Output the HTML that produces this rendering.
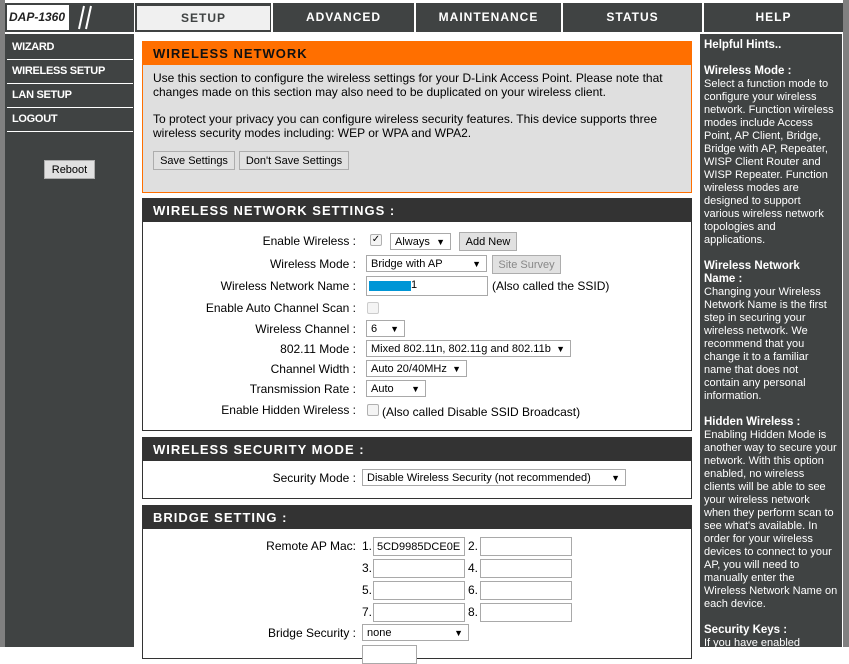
<!DOCTYPE html>
<html><head><meta charset="utf-8"><style>
*{margin:0;padding:0;box-sizing:border-box}
body{width:849px;height:647px;overflow:hidden;background:#fff;font-family:"Liberation Sans",sans-serif;position:relative}
.a{position:absolute}
.tab{position:absolute;top:3px;height:29px;background:#404343;color:#fff;font-weight:bold;font-size:12px;letter-spacing:1px;text-align:center;line-height:29px}
.nav{position:absolute;left:7px;width:126px;color:#fff;font-weight:bold;font-size:11px;letter-spacing:-0.3px;padding-left:5px;height:24px;line-height:22px;border-bottom:1px solid #fff}
.hdr{position:absolute;left:142px;width:550px;height:24px;background:#333;color:#fff;font-weight:bold;font-size:13px;letter-spacing:1px;padding-left:11px;line-height:26px}
.box{position:absolute;left:142px;width:550px;border:1px solid #333;border-top:none;background:#fff}
.lbl{position:absolute;right:493px;font-size:12px;color:#000;text-align:right;white-space:nowrap}
.sel{position:absolute;height:17px;border:1px solid #a9a9a9;background:#fff;font-size:11px;padding-left:4px;line-height:16px;white-space:nowrap}
.sel::after{content:"▼";position:absolute;right:5px;top:0;font-size:9px}
.btn{position:absolute;height:19px;border:1px solid #adadad;background:#e1e1e1;font-size:11px;text-align:center;line-height:18px;white-space:nowrap}
.inp{position:absolute;height:19px;border:1px solid #a9a9a9;background:#fff;font-size:11px;padding-left:3px;line-height:18px}
.cb{position:absolute;width:12px;height:12px;border:1px solid #b0b0b0;border-radius:2px;background:#f4f4f4}
.t{position:absolute;font-size:12px;white-space:nowrap}
.help{position:absolute;left:700px;top:34px;width:142px;height:613px;background:#404343;color:#fff;font-size:11px;line-height:13px;padding:5px 4px;white-space:nowrap}
.help b{font-size:11.5px}
</style></head><body>
<div class="a" style="left:0;top:0;width:5px;height:647px;background:#808080"></div>
<div class="a" style="left:843px;top:0;width:6px;height:647px;background:#808080"></div>
<div class="a" style="left:5px;top:3px;width:838px;height:29px;background:#fff"></div>
<div class="a" style="left:5px;top:3px;width:129px;height:29px;background:#404343"></div>
<div class="a" style="left:7px;top:5px;width:62px;height:25px;background:#fff;font-style:italic;font-weight:bold;font-size:12px;line-height:25px;padding-left:2px;color:#222;white-space:nowrap;overflow:hidden">DAP-1360</div>
<svg class="a" style="left:70px;top:5px" width="26" height="26"><line x1="9" y1="24" x2="14" y2="1" stroke="#fff" stroke-width="2"/><line x1="16" y1="24" x2="21" y2="1" stroke="#fff" stroke-width="2"/></svg>
<div class="tab" style="left:135px;width:136px;background:#404343"></div>
<div class="a" style="left:137px;top:6px;width:133px;height:24px;background:#f0f0f0;color:#404343;font-weight:bold;font-size:12px;letter-spacing:1px;text-align:center;line-height:24px">SETUP</div>
<div class="tab" style="left:273px;width:141px">ADVANCED</div>
<div class="tab" style="left:416px;width:145px">MAINTENANCE</div>
<div class="tab" style="left:563px;width:139px">STATUS</div>
<div class="tab" style="left:704px;width:139px">HELP</div>

<div class="a" style="left:5px;top:34px;width:129px;height:613px;background:#404343"></div>
<div class="nav" style="top:36px">WIZARD</div>
<div class="nav" style="top:60px">WIRELESS SETUP</div>
<div class="nav" style="top:84px">LAN SETUP</div>
<div class="nav" style="top:108px">LOGOUT</div>
<div class="btn" style="left:44px;top:160px;width:51px;height:19px;background:#e1e1e1">Reboot</div>

<div class="a" style="left:142px;top:41px;width:550px;height:152px;border:1px solid #ff6f00;background:#dfdfdf"></div>
<div class="a" style="left:142px;top:41px;width:550px;height:24px;background:#ff6f00;font-weight:bold;font-size:13px;letter-spacing:1px;padding-left:11px;line-height:26px;color:#111">WIRELESS NETWORK</div>
<div class="t" style="left:153px;top:71px;line-height:14px">Use this section to configure the wireless settings for your D-Link Access Point. Please note that<br>changes made on this section may also need to be duplicated on your wireless client.</div>
<div class="t" style="left:153px;top:112px;line-height:14px">To protect your privacy you can configure wireless security features. This device supports three<br>wireless security modes including: WEP or WPA and WPA2.</div>
<div class="btn" style="left:153px;top:151px;width:82px">Save Settings</div>
<div class="btn" style="left:239px;top:151px;width:110px">Don't Save Settings</div>

<div class="hdr" style="top:198px">WIRELESS NETWORK SETTINGS :</div>
<div class="box" style="top:222px;height:209px"></div>
<div class="lbl" style="top:234px">Enable Wireless :</div>
<div class="cb" style="left:370px;top:234px;font-size:10px;line-height:10px;text-align:center">✓</div>
<div class="sel" style="left:390px;top:233px;width:61px">Always</div>
<div class="btn" style="left:459px;top:232px;width:58px">Add New</div>
<div class="lbl" style="top:257px">Wireless Mode :</div>
<div class="sel" style="left:366px;top:255px;width:121px">Bridge with AP</div>
<div class="btn" style="left:492px;top:255px;width:69px;color:#888">Site Survey</div>
<div class="lbl" style="top:279px">Wireless Network Name :</div>
<div class="inp" style="left:366px;top:276px;width:122px;height:20px"></div>
<div class="a" style="left:369px;top:281px;width:42px;height:10px;background:#0096d6"></div>
<div class="t" style="left:411px;top:279px;font-size:11px">1</div>
<div class="t" style="left:492px;top:279px">(Also called the SSID)</div>
<div class="lbl" style="top:301px">Enable Auto Channel Scan :</div>
<div class="cb" style="left:367px;top:302px;border-color:#ccc"></div>
<div class="lbl" style="top:322px">Wireless Channel :</div>
<div class="sel" style="left:366px;top:320px;width:39px">6</div>
<div class="lbl" style="top:342px">802.11 Mode :</div>
<div class="sel" style="left:366px;top:340px;width:205px">Mixed 802.11n, 802.11g and 802.11b</div>
<div class="lbl" style="top:362px">Channel Width :</div>
<div class="sel" style="left:366px;top:360px;width:101px">Auto 20/40MHz</div>
<div class="lbl" style="top:382px">Transmission Rate :</div>
<div class="sel" style="left:366px;top:380px;width:60px">Auto</div>
<div class="lbl" style="top:403px">Enable Hidden Wireless :</div>
<div class="cb" style="left:367px;top:404px"></div>
<div class="t" style="left:382px;top:405px">(Also called Disable SSID Broadcast)</div>

<div class="hdr" style="top:437px">WIRELESS SECURITY MODE :</div>
<div class="box" style="top:461px;height:38px"></div>
<div class="lbl" style="top:471px">Security Mode :</div>
<div class="sel" style="left:362px;top:469px;width:264px">Disable Wireless Security (not recommended)</div>

<div class="hdr" style="top:505px">BRIDGE SETTING :</div>
<div class="box" style="top:529px;height:130px"></div>
<div class="lbl" style="top:539px">Remote AP Mac:</div>
<div class="t" style="left:362px;top:539px">1.</div><div class="inp" style="left:373px;top:537px;width:92px">5CD9985DCE0E</div>
<div class="t" style="left:468px;top:539px">2.</div><div class="inp" style="left:480px;top:537px;width:92px"></div>
<div class="t" style="left:362px;top:561px">3.</div><div class="inp" style="left:373px;top:559px;width:92px"></div>
<div class="t" style="left:468px;top:561px">4.</div><div class="inp" style="left:480px;top:559px;width:92px"></div>
<div class="t" style="left:362px;top:583px">5.</div><div class="inp" style="left:373px;top:581px;width:92px"></div>
<div class="t" style="left:468px;top:583px">6.</div><div class="inp" style="left:480px;top:581px;width:92px"></div>
<div class="t" style="left:362px;top:605px">7.</div><div class="inp" style="left:373px;top:603px;width:92px"></div>
<div class="t" style="left:468px;top:605px">8.</div><div class="inp" style="left:480px;top:603px;width:92px"></div>
<div class="lbl" style="top:626px">Bridge Security :</div>
<div class="sel" style="left:362px;top:624px;width:107px">none</div>
<div class="inp" style="left:362px;top:645px;width:55px"></div>

<div class="help"><b>Helpful Hints..</b><br><br><b>Wireless Mode :</b><br>Select a function mode to<br>configure your wireless<br>network. Function wireless<br>modes include Access<br>Point, AP Client, Bridge,<br>Bridge with AP, Repeater,<br>WISP Client Router and<br>WISP Repeater. Function<br>wireless modes are<br>designed to support<br>various wireless network<br>topologies and<br>applications.<br><br><b>Wireless Network<br>Name :</b><br>Changing your Wireless<br>Network Name is the first<br>step in securing your<br>wireless network. We<br>recommend that you<br>change it to a familiar<br>name that does not<br>contain any personal<br>information.<br><br><b>Hidden Wireless :</b><br>Enabling Hidden Mode is<br>another way to secure your<br>network. With this option<br>enabled, no wireless<br>clients will be able to see<br>your wireless network<br>when they perform scan to<br>see what's available. In<br>order for your wireless<br>devices to connect to your<br>AP, you will need to<br>manually enter the<br>Wireless Network Name on<br>each device.<br><br><b>Security Keys :</b><br>If you have enabled</div>
</body></html>
